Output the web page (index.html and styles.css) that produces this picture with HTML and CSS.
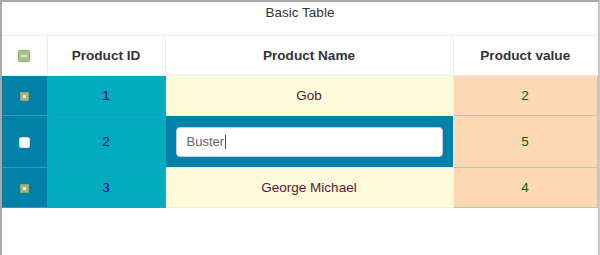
FILE: index.html
```html
<!DOCTYPE html>
<html>
<head>
<meta charset="utf-8">
<link rel="stylesheet" href="styles.css">
</head>
<body>
<div class="frame">
  <div class="caption">Basic Table</div>
  <table class="grid">
    <colgroup>
      <col class="c-sel"><col class="c-id"><col class="c-name"><col class="c-val">
    </colgroup>
    <thead>
      <tr>
        <th class="h-sel"><span class="cb-head"><span class="cb-bar"></span></span></th>
        <th>Product ID</th>
        <th>Product Name</th>
        <th>Product value</th>
      </tr>
    </thead>
    <tbody>
      <tr class="row">
        <td class="sel"><span class="cb-on"><span class="cb-dot"></span></span></td>
        <td class="id">1</td>
        <td class="name">Gob</td>
        <td class="val">2</td>
      </tr>
      <tr class="row tall">
        <td class="sel"><span class="cb-off"></span></td>
        <td class="id">2</td>
        <td class="name editing"><div class="input">Buster<span class="caret"></span></div></td>
        <td class="val">5</td>
      </tr>
      <tr class="row">
        <td class="sel"><span class="cb-on"><span class="cb-dot"></span></span></td>
        <td class="id">3</td>
        <td class="name">George Michael</td>
        <td class="val">4</td>
      </tr>
    </tbody>
  </table>
</div>
</body>
</html>
```
FILE: styles.css
```css
html, body { margin: 0; padding: 0; background: #fff; }
body { font-family: "Liberation Sans", Arial, sans-serif; overflow: hidden; }
.frame {
  width: 596px;
  height: 253px;
  overflow: hidden;
  border-top: 2px solid #a9a9a9;
  border-left: 2px solid #a9a9a9;
  border-right: 2px solid #c8c8c8;
  box-sizing: content-box;
}
.caption {
  height: 33px;
  line-height: 22px;
  text-align: center;
  font-size: 13.5px;
  color: #333;
}
.grid {
  width: 595px;
  border-collapse: collapse;
  table-layout: fixed;
}
.c-sel { width: 45px; }
.c-id { width: 118px; }
.c-name { width: 288px; }
.c-val { width: 144px; }
th {
  height: 39px;
  padding: 0;
  border: 1px solid #ebebf0;
  font-size: 13.6px;
  font-weight: bold;
  color: #333;
  text-align: center;
  vertical-align: middle;
}
thead tr th:first-child { border-left: none; }
thead tr th:last-child { border-right: none; }
td {
  padding: 0;
  height: 39px;
  text-align: center;
  vertical-align: middle;
  font-size: 13.5px;
}
.row.tall td { height: 51px; }
.sel { background: #0081a7; border: 1px solid #4f8ea6; border-left: none; }
.id { background: #00acbd; color: #00008b; border: 1px solid #7b6be6; }
.name { background: #fdfbdc; color: #5e1636; border: 1px solid #f5f0d0; }
.val { background: #fcd8b4; color: #006400; border: 1px solid #a8d3a2; }
.name.editing { background: #0081a7; padding: 0 10px; }
.input {
  height: 30px;
  box-sizing: border-box;
  background: #fff;
  border: 1px solid #c9c9e0;
  border-radius: 4px;
  text-align: left;
  padding-left: 10px;
  font-size: 13px;
  color: #666;
  display: flex;
  align-items: center;
}
.caret { display: inline-block; width: 1px; height: 14px; background: #444; margin-left: 1px; }
.cb-head {
  display: inline-flex;
  align-items: center;
  justify-content: center;
  width: 10px;
  height: 10px;
  background: #a4c585;
  border: 1px solid #93b275;
  border-radius: 2px;
  vertical-align: middle;
}
.cb-bar { width: 6px; height: 2px; background: #d9e7c8; }
.cb-on {
  display: inline-flex;
  align-items: center;
  justify-content: center;
  width: 7px;
  height: 7px;
  background: #a2b780;
  border: 1px solid #8da46c;
  vertical-align: middle;
}
.cb-dot { width: 3px; height: 3px; background: #e3ead6; }
.cb-off {
  display: inline-block;
  width: 9px;
  height: 9px;
  background: #fff;
  border: 1px solid #ddd;
  border-radius: 2px;
  vertical-align: middle;
}
```
